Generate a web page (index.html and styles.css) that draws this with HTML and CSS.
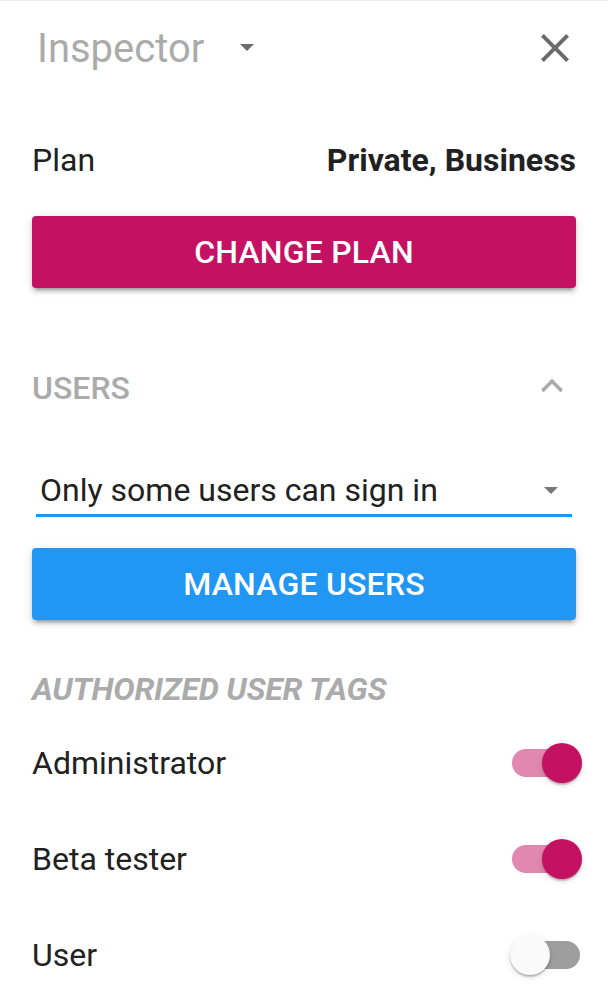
FILE: index.html
```html
<!DOCTYPE html>
<html>
<head>
<meta charset="utf-8">
<link rel="stylesheet" href="styles.css">
</head>
<body>
<div class="panel">
  <header class="header">
    <div class="title">
      <span class="title-text">Inspector</span>
      <span class="tri tri-title"></span>
    </div>
    <svg class="close" viewBox="0 0 24 24" width="48" height="48"><path d="M19 6.41L17.59 5 12 10.59 6.41 5 5 6.41 10.59 12 5 17.59 6.41 19 12 13.41 17.59 19 19 17.59 13.41 12z" fill="#6b6b6b"/></svg>
  </header>

  <div class="plan-row">
    <span class="plan-label">Plan</span>
    <span class="plan-value">Private, Business</span>
  </div>

  <button class="btn btn-pink">CHANGE PLAN</button>

  <div class="section-head">
    <span class="section-title">USERS</span>
    <svg class="chev" viewBox="0 0 24 24" width="44" height="44"><path d="M12 8l-6 6 1.41 1.41L12 10.83l4.59 4.58L18 14z" fill="#aaaaaa"/></svg>
  </div>

  <div class="select">
    <span class="select-text">Only some users can sign in</span>
    <span class="tri tri-select"></span>
  </div>

  <button class="btn btn-blue">MANAGE USERS</button>

  <div class="subhead">AUTHORIZED USER TAGS</div>

  <div class="toggle-list">
    <div class="toggle-row">
      <span class="toggle-label">Administrator</span>
      <span class="switch on"><span class="track"></span><span class="thumb"></span></span>
    </div>
    <div class="toggle-row">
      <span class="toggle-label">Beta tester</span>
      <span class="switch on"><span class="track"></span><span class="thumb"></span></span>
    </div>
    <div class="toggle-row">
      <span class="toggle-label">User</span>
      <span class="switch"><span class="track"></span><span class="thumb"></span></span>
    </div>
  </div>
</div>
</body>
</html>
```

FILE: styles.css
```css
* { box-sizing: border-box; }
html, body {
  margin: 0;
  padding: 0;
  background: #ffffff;
}
body {
  font-family: Roboto, "Liberation Sans", sans-serif;
  color: #212121;
  border-top: 1px solid #ececec;
}
.panel {
  padding: 0 32px;
}
.header {
  height: 95px;
  display: flex;
  align-items: center;
  justify-content: space-between;
}
.title {
  display: flex;
  align-items: center;
}
.title-text {
  font-size: 40px;
  line-height: 48px;
  color: #ababab;
  padding-left: 5px;
}
.tri {
  display: inline-block;
  width: 0;
  height: 0;
  border-left: 7px solid transparent;
  border-right: 7px solid transparent;
  border-top: 7px solid #6b6b6b;
}
.tri-title {
  margin-left: 36px;
  margin-top: -2px;
}
.close {
  display: block;
  margin-right: -3px;
  margin-top: -2px;
}
.plan-row {
  margin-top: 40px;
  height: 48px;
  display: flex;
  align-items: center;
  justify-content: space-between;
  font-size: 32px;
  line-height: 48px;
}
.plan-label {
  color: #212121;
}
.plan-value {
  font-weight: 700;
  color: #212121;
}
.btn {
  display: block;
  width: 100%;
  height: 72px;
  margin-top: 32px;
  border: none;
  border-radius: 4px;
  color: #ffffff;
  font-family: Roboto, "Liberation Sans", sans-serif;
  font-size: 32px;
  font-weight: 500;
  letter-spacing: 0.2px;
  box-shadow: 0 6px 2px -4px rgba(0,0,0,0.2), 0 4px 4px 0 rgba(0,0,0,0.14), 0 2px 10px 0 rgba(0,0,0,0.12);
}
.btn-pink {
  background: #c51162;
}
.btn-blue {
  background: #2196f3;
  margin-top: 31px;
}
.section-head {
  margin-top: 76px;
  height: 48px;
  display: flex;
  align-items: center;
  justify-content: space-between;
}
.section-title {
  font-size: 32px;
  font-weight: 500;
  line-height: 48px;
  color: #ababab;
}
.chev {
  display: block;
  margin-right: 2px;
  margin-top: -5px;
}
.select {
  margin: 54px 4px 0;
  height: 51px;
  display: flex;
  align-items: center;
  justify-content: space-between;
  border-bottom: 3px solid #2196f3;
}
.select-text {
  font-size: 32px;
  line-height: 48px;
  color: #212121;
  padding-left: 4px;
}
.tri-select {
  border-top-color: #777777;
  margin-right: 14px;
}
.subhead {
  margin-top: 45px;
  height: 48px;
  line-height: 48px;
  font-size: 32px;
  font-weight: 700;
  font-style: italic;
  letter-spacing: -0.25px;
  color: #ababab;
}
.toggle-list {
  margin-top: 2px;
}
.toggle-row {
  height: 96px;
  display: flex;
  align-items: center;
  justify-content: space-between;
}
.toggle-label {
  font-size: 32px;
  line-height: 48px;
  color: #212121;
}
.switch {
  position: relative;
  width: 72px;
  height: 40px;
  margin-right: -6px;
}
.track {
  position: absolute;
  left: 2px;
  top: 6px;
  width: 68px;
  height: 28px;
  border-radius: 14px;
  background: #9e9e9e;
}
.thumb {
  position: absolute;
  top: 0;
  left: 0;
  width: 40px;
  height: 40px;
  border-radius: 50%;
  background: #fafafa;
  box-shadow: 0 2px 2px -1px rgba(0,0,0,0.2), 0 2px 2px 0 rgba(0,0,0,0.14), 0 2px 6px 0 rgba(0,0,0,0.12);
}
.switch.on .track {
  background: #e288b0;
}
.switch.on .thumb {
  left: 32px;
  background: #c51162;
}
```
